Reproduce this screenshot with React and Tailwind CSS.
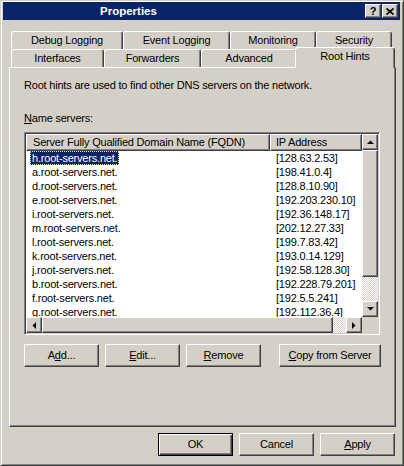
import React from "react";

const raised =
  "bg-[#d4d0c8] border border-t-white border-l-white border-r-[#404040] border-b-[#404040] shadow-[inset_-1px_-1px_0_#808080]";

const tabCls =
  "bg-[#d4d0c8] h-full flex items-center justify-center border-t border-l border-r border-t-white border-l-white border-r-[#404040] shadow-[inset_-1px_0_0_#808080] rounded-tl-[3px] rounded-tr-[3px]";

const rows = [
  ["h.root-servers.net.", "[128.63.2.53]"],
  ["a.root-servers.net.", "[198.41.0.4]"],
  ["d.root-servers.net.", "[128.8.10.90]"],
  ["e.root-servers.net.", "[192.203.230.10]"],
  ["i.root-servers.net.", "[192.36.148.17]"],
  ["m.root-servers.net.", "[202.12.27.33]"],
  ["l.root-servers.net.", "[199.7.83.42]"],
  ["k.root-servers.net.", "[193.0.14.129]"],
  ["j.root-servers.net.", "[192.58.128.30]"],
  ["b.root-servers.net.", "[192.228.79.201]"],
  ["f.root-servers.net.", "[192.5.5.241]"],
  ["g.root-servers.net.", "[192.112.36.4]"],
];

function Arrow({ dir }) {
  const pts = {
    up: "0,4 7,4 3.5,0.5",
    down: "0,0 7,0 3.5,3.5",
    left: "4,0 4,7 0.5,3.5",
    right: "0,0 0,7 3.5,3.5",
  }[dir];
  const vertical = dir === "up" || dir === "down";
  return (
    <svg
      width={vertical ? 7 : 4}
      height={vertical ? 4 : 7}
      viewBox={vertical ? "0 0 7 4" : "0 0 4 7"}
    >
      <polygon points={pts} fill="#000" />
    </svg>
  );
}

function SBtn({ dir }) {
  return (
    <div className={`${raised} w-[16px] h-[16px] flex items-center justify-center shrink-0`}>
      <Arrow dir={dir} />
    </div>
  );
}

const checker =
  "bg-[repeating-conic-gradient(#ffffff_0%_25%,#d4d0c8_0%_50%)] bg-[length:2px_2px]";

export default function App() {
  return (
    <div className="w-[404px] h-[466px] bg-[#d4d0c8] border border-t-[#d4d0c8] border-l-[#d4d0c8] border-r-[#404040] border-b-[#404040] shadow-[inset_1px_1px_0_#ffffff,inset_-1px_-1px_0_#808080] pt-[1px] pl-[2px] pr-[3px] font-['Liberation_Sans',Arial,sans-serif] text-[11px] leading-[13px] text-black tracking-[-0.2px] flex flex-col overflow-hidden">
      {/* Title bar */}
      <div className="h-[18px] bg-[#0a246a] flex items-center shrink-0">
        <span className="pl-[97px] font-bold text-white text-[11.5px] tracking-normal">Properties</span>
        <div className="ml-auto mr-[2px] flex gap-[1px]">
          <div className={`${raised} w-[16px] h-[14px] flex items-center justify-center font-bold text-[11px] leading-none tracking-normal`}>
            ?
          </div>
          <div className={`${raised} w-[16px] h-[14px] flex items-center justify-center`}>
            <svg width="8" height="7" viewBox="0 0 8 7">
              <path d="M0.5 0.5 L7.5 6.5 M7.5 0.5 L0.5 6.5" stroke="#000" strokeWidth="1.7" />
            </svg>
          </div>
        </div>
      </div>

      {/* Tabs */}
      <div className="mt-[11px] flex pl-[8px] h-[18px] shrink-0">
        <div className={`${tabCls} w-[112px]`}>Debug Logging</div>
        <div className={`${tabCls} w-[107px]`}>Event Logging</div>
        <div className={`${tabCls} w-[86px]`}>Monitoring</div>
        <div className={`${tabCls} w-[76px]`}>Security</div>
      </div>
      <div className="flex pl-[8px] h-[18px] items-end shrink-0">
        <div className={`${tabCls} w-[93px]`}>Interfaces</div>
        <div className={`${tabCls} w-[97px]`}>Forwarders</div>
        <div className={`${tabCls} w-[96px]`}>Advanced</div>
        <div className="relative z-10 -ml-[2px] -mb-[1px] w-[100px] h-[21px] bg-[#d4d0c8] flex items-start justify-center pt-[2px] border-t border-l border-r border-t-white border-l-white border-r-[#404040] shadow-[inset_-1px_0_0_#808080] rounded-tl-[3px] rounded-tr-[3px]">
          Root Hints
        </div>
      </div>

      {/* Panel */}
      <div className="relative ml-[6px] w-[387px] h-[360px] shrink-0 border border-t-white border-l-white border-r-[#404040] border-b-[#404040] shadow-[inset_-1px_-1px_0_#808080] pt-[11px] pl-[14px] flex flex-col">
        <p>Root hints are used to find other DNS servers on the network.</p>
        <p className="mt-[20px]">
          <span className="underline">N</span>ame servers:
        </p>

        {/* List view */}
        <div className="mt-[7px] w-[356px] h-[203px] border border-t-[#808080] border-l-[#808080] border-r-white border-b-white shadow-[inset_1px_1px_0_#404040,inset_-1px_-1px_0_#d4d0c8] p-[1px] flex flex-col">
          <div className="flex h-[183px]">
            <div className="w-[336px] bg-white flex flex-col overflow-hidden">
              <div className="flex h-[17px] shrink-0">
                <div className={`${raised} w-[244px] h-full flex items-center pl-[6px] whitespace-nowrap overflow-hidden`}>
                  Server Fully Qualified Domain Name (FQDN)
                </div>
                <div className={`${raised} w-[92px] h-full flex items-center pl-[5px] whitespace-nowrap`}>
                  IP Address
                </div>
              </div>
              <div className="flex-1 overflow-hidden">
                {rows.map(([name, ip], i) => (
                  <div key={name} className="flex h-[14px] leading-[14px] whitespace-nowrap">
                    <div className={i === 0 ? "w-[244px] pl-[4px]" : "w-[244px] pl-[6px]"}>
                      {i === 0 ? (
                        <span className="inline-block h-[14px] leading-[12px] px-[1px] bg-[#0a246a] text-white border border-dotted border-[#e8e4a0]">
                          {name}
                        </span>
                      ) : (
                        name
                      )}
                    </div>
                    <div className="w-[92px] pl-[6px]">{ip}</div>
                  </div>
                ))}
              </div>
            </div>
            {/* vertical scrollbar */}
            <div className="w-[16px] flex flex-col">
              <SBtn dir="up" />
              <div className={`${raised} h-[127px] shrink-0`} />
              <div className={`${checker} h-[24px] shrink-0`} />
              <SBtn dir="down" />
            </div>
          </div>
          {/* horizontal scrollbar */}
          <div className="flex h-[16px]">
            <SBtn dir="left" />
            <div className={`${raised} w-[291px] h-[16px] shrink-0`} />
            <div className={`${checker} w-[13px] h-[16px] shrink-0`} />
            <SBtn dir="right" />
            <div className="w-[16px] h-[16px] bg-[#d4d0c8]" />
          </div>
        </div>

        {/* list buttons */}
        <div className="mt-[9px] flex w-[357px] gap-[6px]">
          <button className={`${raised} w-[75px] h-[23px]`}>
            A<span className="underline">d</span>d...
          </button>
          <button className={`${raised} w-[75px] h-[23px]`}>
            <span className="underline">E</span>dit...
          </button>
          <button className={`${raised} w-[75px] h-[23px]`}>
            <span className="underline">R</span>emove
          </button>
          <button className={`${raised} ml-auto w-[102px] h-[23px]`}>
            <span className="underline">C</span>opy from Server
          </button>
        </div>
      </div>

      {/* dialog buttons */}
      <div className="mt-[6px] ml-[6px] w-[387px] pr-[1px] flex justify-end gap-[6px]">
        <button className="w-[75px] h-[23px] bg-[#d4d0c8] border border-black shadow-[inset_1px_1px_0_#ffffff,inset_-1px_-1px_0_#404040,inset_-2px_-2px_0_#808080]">
          OK
        </button>
        <button className={`${raised} w-[75px] h-[23px]`}>Cancel</button>
        <button className={`${raised} w-[75px] h-[23px]`}>
          <span className="underline">A</span>pply
        </button>
      </div>
    </div>
  );
}
